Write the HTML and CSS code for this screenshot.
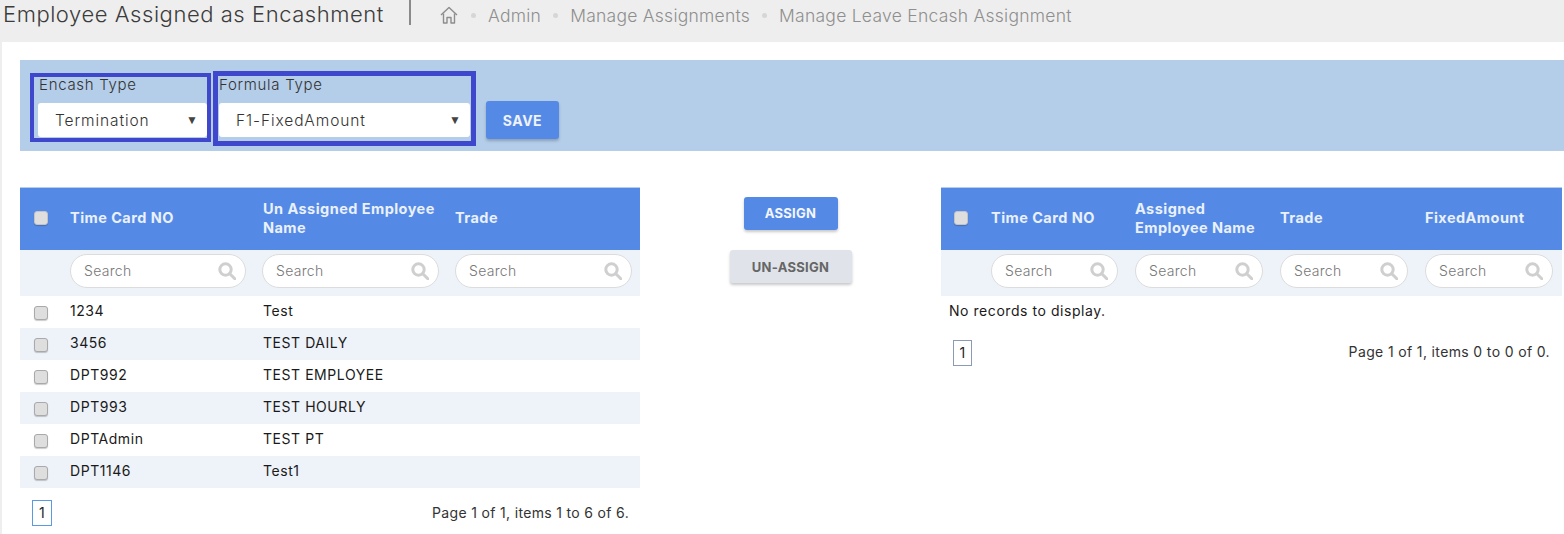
FILE: index.html
```html
<!DOCTYPE html>
<html lang="en">
<head>
<meta charset="utf-8">
<title>Employee Assigned as Encashment</title>
<link rel="stylesheet" href="styles.css">
</head>
<body>
<header class="topbar">
  <h1 class="title">Employee Assigned as Encashment</h1>
  <span class="divider"></span>
  <nav class="crumbs">
    <svg class="home" viewBox="0 0 18 18" width="18" height="18" fill="none" stroke="#8d8d8d" stroke-width="1.4" stroke-linejoin="round"><path d="M1 9 9 1.500 17 9"/><path d="M3.500 7.500V17H7v-5.500h4V17h3.500V7.500"/></svg>
    <i class="dot"></i><span>Admin</span>
    <i class="dot"></i><span>Manage Assignments</span>
    <i class="dot"></i><span>Manage Leave Encash Assignment</span>
  </nav>
</header>
<main class="page">
  <section class="filters">
    <div class="field field-a">
      <label class="field-label">Encash Type</label>
      <div class="select"><span>Termination</span><span class="arrow">▼</span></div>
    </div>
    <div class="field field-b">
      <label class="field-label">Formula Type</label>
      <div class="select"><span>F1-FixedAmount</span><span class="arrow">▼</span></div>
    </div>
    <button class="btn btn-save">SAVE</button>
  </section>
  <section class="panels">
    <div class="panel panel-left">
      <table class="grid">
        <colgroup><col class="c-check"><col class="c-192"><col class="c-193"><col class="c-193"></colgroup>
        <thead>
          <tr class="head">
            <th><input type="checkbox" class="check"></th>
            <th>Time Card NO</th><th>Un Assigned Employee Name</th><th>Trade</th>
          </tr>
          <tr class="search-row">
            <td></td>
            <td><label class="pill"><input placeholder="Search"><svg viewBox="0 0 18 18" width="18" height="18" fill="none" stroke="#cfcfcf" stroke-width="3"><circle cx="7.500" cy="7.500" r="5.700"/><path d="m11.800 11.800 5 5" stroke-linecap="round"/></svg></label></td>
            <td><label class="pill"><input placeholder="Search"><svg viewBox="0 0 18 18" width="18" height="18" fill="none" stroke="#cfcfcf" stroke-width="3"><circle cx="7.500" cy="7.500" r="5.700"/><path d="m11.800 11.800 5 5" stroke-linecap="round"/></svg></label></td>
            <td><label class="pill"><input placeholder="Search"><svg viewBox="0 0 18 18" width="18" height="18" fill="none" stroke="#cfcfcf" stroke-width="3"><circle cx="7.500" cy="7.500" r="5.700"/><path d="m11.800 11.800 5 5" stroke-linecap="round"/></svg></label></td>
          </tr>
        </thead>
        <tbody>
          <tr><td><input type="checkbox" class="check"></td><td>1234</td><td>Test</td><td></td></tr>
          <tr><td><input type="checkbox" class="check"></td><td>3456</td><td>TEST DAILY</td><td></td></tr>
          <tr><td><input type="checkbox" class="check"></td><td>DPT992</td><td>TEST EMPLOYEE</td><td></td></tr>
          <tr><td><input type="checkbox" class="check"></td><td>DPT993</td><td>TEST HOURLY</td><td></td></tr>
          <tr><td><input type="checkbox" class="check"></td><td>DPTAdmin</td><td>TEST PT</td><td></td></tr>
          <tr><td><input type="checkbox" class="check"></td><td>DPT1146</td><td>Test1</td><td></td></tr>
        </tbody>
      </table>
      <div class="pager pager-left"><span class="page-num">1</span><span>Page 1 of 1, items 1 to 6 of 6.</span></div>
    </div>
    <div class="actions">
      <button class="btn btn-assign">ASSIGN</button>
      <button class="btn btn-unassign">UN-ASSIGN</button>
    </div>
    <div class="panel panel-right">
      <table class="grid">
        <colgroup><col class="c-check"><col class="c-144"><col class="c-145"><col class="c-145"><col class="c-145"></colgroup>
        <thead>
          <tr class="head">
            <th><input type="checkbox" class="check"></th>
            <th>Time Card NO</th><th>Assigned Employee Name</th><th>Trade</th><th>FixedAmount</th>
          </tr>
          <tr class="search-row">
            <td></td>
            <td><label class="pill"><input placeholder="Search"><svg viewBox="0 0 18 18" width="18" height="18" fill="none" stroke="#cfcfcf" stroke-width="3"><circle cx="7.500" cy="7.500" r="5.700"/><path d="m11.800 11.800 5 5" stroke-linecap="round"/></svg></label></td>
            <td><label class="pill"><input placeholder="Search"><svg viewBox="0 0 18 18" width="18" height="18" fill="none" stroke="#cfcfcf" stroke-width="3"><circle cx="7.500" cy="7.500" r="5.700"/><path d="m11.800 11.800 5 5" stroke-linecap="round"/></svg></label></td>
            <td><label class="pill"><input placeholder="Search"><svg viewBox="0 0 18 18" width="18" height="18" fill="none" stroke="#cfcfcf" stroke-width="3"><circle cx="7.500" cy="7.500" r="5.700"/><path d="m11.800 11.800 5 5" stroke-linecap="round"/></svg></label></td>
            <td><label class="pill"><input placeholder="Search"><svg viewBox="0 0 18 18" width="18" height="18" fill="none" stroke="#cfcfcf" stroke-width="3"><circle cx="7.500" cy="7.500" r="5.700"/><path d="m11.800 11.800 5 5" stroke-linecap="round"/></svg></label></td>
          </tr>
        </thead>
        <tbody>
          <tr><td colspan="5" class="empty">No records to display.</td></tr>
        </tbody>
      </table>
      <div class="pager pager-right"><span class="page-num page-num-plain">1</span><span class="page-info">Page 1 of 1, items 0 to 0 of 0.</span></div>
    </div>
  </section>
</main>
</body>
</html>
```
FILE: styles.css
```css
* { box-sizing: border-box; }
html, body { margin: 0; padding: 0; height: 100%; overflow: hidden; }
body {
  background: #eeeeee;
  font-family: Inter, "Liberation Sans", sans-serif;
  font-size: 14px;
  color: #222;
}
.topbar {
  height: 42px;
  display: flex;
  align-items: flex-start;
  padding-left: 3px;
}
.title {
  margin: 0;
  width: 381px;
  font-size: 22px;
  line-height: 29px;
  font-weight: 300;
  letter-spacing: 0.55px;
  color: #3c3c3c;
  white-space: nowrap;
}
.divider {
  width: 2px;
  height: 25px;
  margin-left: 25px;
  background: #8a8a8a;
}
.crumbs {
  display: flex;
  align-items: center;
  height: 30px;
  margin-left: 29px;
  font-size: 17.500px;
  font-weight: 300;
  color: #8f8f8f;
  white-space: nowrap;
  letter-spacing: 0.25px;
}
.home { margin-right: 13px; }
.dot {
  width: 5px;
  height: 5px;
  border-radius: 50%;
  background: #d6d6d6;
  margin-right: 12px;
}
.crumbs span { margin-right: 12px; }
.page {
  margin-left: 2px;
  height: 492px;
  background: #fff;
  padding: 18px 0 0 18px;
}
.filters {
  height: 91px;
  background: #b4cde9;
  display: flex;
  align-items: flex-start;
  padding: 11px 0 0 10px;
}
.field { display: flex; flex-direction: column; border: solid #3f48cc; }
.field-label { font-size: 15px; color: #333; letter-spacing: 0.7px; font-weight: 300; }
.field-a { width: 181px; height: 69px; margin-top: 2px; border-width: 4px; padding-left: 4px; }
.field-a .field-label { padding-left: 1px; height: 26px; line-height: 16px; }
.field-a .select { width: 169px; }
.field-b { width: 263px; height: 75px; margin-left: 2px; border-width: 5px; padding: 0 1px; }
.field-b .field-label { height: 27px; line-height: 18px; }
.select {
  height: 34px;
  background: #fff;
  border-radius: 3px;
  display: flex;
  justify-content: space-between;
  align-items: center;
  padding: 0 9px 0 17px;
  font-size: 15.500px;
  letter-spacing: 0.9px;
  font-weight: 300;
  color: #333;
}
.arrow { font-size: 12px; color: #444; letter-spacing: 0; font-family: "DejaVu Sans", sans-serif; }
.btn {
  border: 0;
  border-radius: 3px;
  font-family: inherit;
  font-weight: 700;
  font-size: 13px;
  letter-spacing: 0.3px;
  padding: 0;
  box-shadow: 0 2px 3px rgba(0,0,0,.22);
}
.btn-save { width: 73px; height: 38px; margin: 30px 0 0 10px; background: #548ae6; color: #eef3fc; font-size: 14px; letter-spacing: 0.5px; }
.panels { display: flex; align-items: flex-start; padding-top: 36px; }
.panel-left { width: 620px; }
.panel-right { width: 621px; }
.actions {
  width: 301px;
  padding-top: 10px;
  display: flex;
  flex-direction: column;
  align-items: center;
  gap: 20px;
}
.btn-assign { width: 94px; height: 33px; padding-bottom: 2px; background: #548ae6; color: #f3f6fd; }
.btn-unassign { width: 122px; height: 33px; background: #e0e3ea; color: #666; }
.grid { width: 100%; table-layout: fixed; border-collapse: collapse; }
.c-check { width: 42px; }
.c-144 { width: 144px; }
.c-145 { width: 145px; }
.c-192 { width: 192px; }
.c-193 { width: 193px; }
.head { height: 62px; background: #548ae6; color: #eaf1fc; border-top: 1px solid #b4cde9; }
.head th {
  padding: 0 8px 2px;
  text-align: left;
  font-size: 14.500px;
  font-weight: 700;
  line-height: 19px;
  letter-spacing: 0.45px;
}
.search-row { height: 46px; background: #eef2f9; }
.search-row td { padding: 4px 8px 8px; vertical-align: top; }
.panel-right .search-row td { padding-right: 9px; }
.pill {
  display: flex;
  align-items: center;
  height: 34px;
  background: #fff;
  border: 1px solid #dcdcdc;
  border-radius: 17px;
  padding: 0 9px 0 13px;
}
.pill input {
  flex: 1;
  min-width: 0;
  border: 0;
  outline: 0;
  padding: 0;
  background: transparent;
  font-family: inherit;
  font-size: 14px;
  font-weight: 300;
  letter-spacing: 0.3px;
}
.pill input::placeholder { color: #777; opacity: 1; }
tbody tr { height: 32px; }
tbody tr:nth-child(even) { background: #eef2f9; }
tbody td { padding: 0 8px 2px; font-size: 14px; letter-spacing: 0.55px; color: #1a1a1a; white-space: nowrap; }
.panel-left .head th:nth-child(3),
.panel-left tbody td:nth-child(3) { padding-left: 9px; }
.check {
  appearance: none;
  display: block;
  width: 14px;
  height: 14px;
  margin: 4px 0 0 6px;
  background: #dedede;
  border: 1px solid #a9a9a9;
  border-radius: 3px;
  box-shadow: 0 1px 1px rgba(0,0,0,.2);
}
.head .check { margin-top: 0; border-color: #c4c4c4; }
.panel-right .check { margin-left: 5px; }
.pager {
  display: flex;
  justify-content: space-between;
  align-items: center;
  font-size: 14px;
  letter-spacing: 0.33px;
  color: #333;
}
.pager-left { padding: 12px 11px 0 12px; }
.pager-right { padding: 12px 12px 0 12px; }
.page-info { margin-bottom: 2px; letter-spacing: 0.36px; }
.page-num {
  width: 20px;
  height: 26px;
  border: 1px solid #5c9ae0;
  display: flex;
  align-items: center;
  justify-content: center;
  color: #222;
}
.page-num-plain { width: 19px; border-color: #8a9bb3; }
```
